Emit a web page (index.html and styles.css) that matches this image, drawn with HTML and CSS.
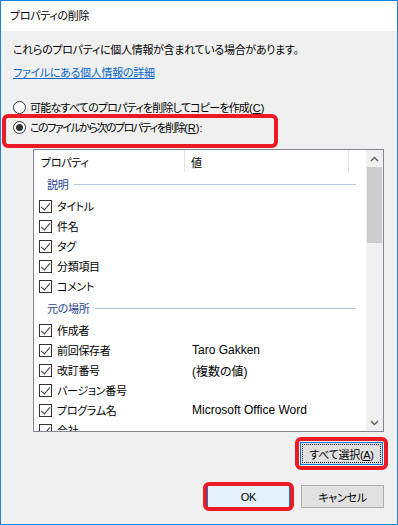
FILE: index.html
```html
<!DOCTYPE html>
<html lang="ja">
<head>
    <meta charset="UTF-8">
    <meta name="viewport" content="width=device-width, initial-scale=1.0">
    <title>プロパティの削除</title>
    <link rel="stylesheet" href="styles.css">
</head>
<body>
    <div class="window">
        <div class="titlebar">プロパティの削除</div>

        <div class="content">
            <p class="intro">これらのプロパティに個人情報が含まれている場合があります。</p>
            <a class="link" href="#">ファイルにある個人情報の詳細</a>

            <div class="options">
                <div class="radio-row">
                    <span class="radio"></span>
                    <span>可能なすべてのプロパティを削除してコピーを作成<span class="key">(<u>C</u>)</span></span>
                </div>
                <div class="radio-row marked">
                    <span class="radio checked"></span>
                    <span class="tight">このファイルから次のプロパティを削除<span class="key">(<u>R</u>):</span></span>
                </div>
            </div>

            <div class="listbox">
                <div class="list">
                    <div class="list-header">
                        <span class="col-name">プロパティ</span>
                        <span class="col-value">値</span>
                        <span class="col-rest"></span>
                    </div>

                    <div class="group"><span>説明</span></div>
                    <div class="row"><span class="check"></span><span class="name">タイトル</span><span class="value"></span></div>
                    <div class="row"><span class="check"></span><span class="name">件名</span><span class="value"></span></div>
                    <div class="row"><span class="check"></span><span class="name">タグ</span><span class="value"></span></div>
                    <div class="row"><span class="check"></span><span class="name">分類項目</span><span class="value"></span></div>
                    <div class="row"><span class="check"></span><span class="name">コメント</span><span class="value"></span></div>

                    <div class="group"><span>元の場所</span></div>
                    <div class="row"><span class="check"></span><span class="name">作成者</span><span class="value"></span></div>
                    <div class="row"><span class="check"></span><span class="name">前回保存者</span><span class="value">Taro Gakken</span></div>
                    <div class="row"><span class="check"></span><span class="name">改訂番号</span><span class="value">(複数の値)</span></div>
                    <div class="row"><span class="check"></span><span class="name">バージョン番号</span><span class="value"></span></div>
                    <div class="row"><span class="check"></span><span class="name">プログラム名</span><span class="value">Microsoft Office Word</span></div>
                    <div class="row"><span class="check"></span><span class="name">会社</span><span class="value"></span></div>
                </div>

                <div class="scrollbar">
                    <span class="arrow">
                        <svg width="9" height="6" viewBox="0 0 9 6"><path d="M1 5 L4.5 1.5 L8 5" fill="none" stroke="#606060" stroke-width="1.4"/></svg>
                    </span>
                    <span class="thumb"></span>
                    <span class="track"></span>
                    <span class="arrow">
                        <svg width="9" height="6" viewBox="0 0 9 6"><path d="M1 1 L4.5 4.5 L8 1" fill="none" stroke="#606060" stroke-width="1.4"/></svg>
                    </span>
                </div>
            </div>

            <div class="select-row">
                <button class="btn focused marked">すべて選択(<u>A</u>)</button>
            </div>

            <div class="dialog-buttons">
                <button class="btn default marked">OK</button>
                <button class="btn">キャンセル</button>
            </div>
        </div>
    </div>
</body>
</html>
```

FILE: styles.css
```css
* {
    box-sizing: border-box;
}

body {
    margin: 0;
    font-family: "Liberation Sans", "Noto Sans CJK JP", sans-serif;
    font-size: 11px;
    letter-spacing: -0.3px;
    font-feature-settings: "palt";
    color: #000;
    background: #f0f0f0;
}

.window {
    width: 398px;
    height: 525px;
    border: 1px solid #1883d7;
    display: flex;
    flex-direction: column;
    background: #f0f0f0;
}

.titlebar {
    height: 30px;
    line-height: 30px;
    padding-left: 9px;
    background: #fff;
}

.content {
    flex: 1;
    padding: 0 12px;
    display: flex;
    flex-direction: column;
}

.intro {
    margin: 11px 0 0;
    line-height: 16px;
}

.link {
    margin-top: 7px;
    line-height: 16px;
    color: #0066cc;
    align-self: flex-start;
}

.options {
    margin-top: 16px;
}

.radio-row {
    position: relative;
    height: 20px;
    display: flex;
    align-items: center;
    gap: 4px;
    letter-spacing: -0.8px;
}

.radio-row .tight {
    letter-spacing: -1.5px;
}

.radio-row .key {
    letter-spacing: 0;
}

.radio {
    width: 13px;
    height: 13px;
    border: 1px solid #333;
    border-radius: 50%;
    background: #fff;
    display: flex;
    align-items: center;
    justify-content: center;
}

.radio.checked::after {
    content: "";
    width: 7px;
    height: 7px;
    border-radius: 50%;
    background: #333;
}

/* red annotation frames from the screenshot */
.marked {
    position: relative;
}

.radio-row.marked::before {
    content: "";
    position: absolute;
    left: -11px;
    top: -3px;
    width: 268px;
    height: 26px;
    border: 4px solid #ec1b23;
    border-radius: 6px;
}

.listbox {
    margin: 12px 1px 0 20px;
    height: 283px;
    border: 1px solid #828790;
    background: #fff;
    display: flex;
}

.list {
    flex: 1;
    overflow: hidden;
}

.list-header {
    height: 22px;
    display: flex;
    line-height: 18px;
}

.list-header span {
    padding-top: 4px;
    border-right: 1px solid #e5e5e5;
}

.col-name {
    width: 151px;
    padding-left: 7px;
}

.col-value {
    width: 164px;
    padding-left: 6px;
}

.col-rest {
    flex: 1;
    border-right: none !important;
}

.group {
    height: 24px;
    display: flex;
    align-items: center;
    padding: 0 10px 0 13px;
    color: #1e3c96;
    gap: 6px;
}

.group::after {
    content: "";
    flex: 1;
    height: 1px;
    background: #b9c6de;
}

.row {
    height: 20px;
    display: flex;
    align-items: center;
    padding-left: 5px;
}

.check {
    width: 13px;
    height: 13px;
    border: 1px solid #333;
    position: relative;
}

.check::after {
    content: "";
    position: absolute;
    left: 3px;
    top: 0px;
    width: 4px;
    height: 8px;
    border: solid #333;
    border-width: 0 1px 1px 0;
    transform: rotate(40deg);
}

.name {
    width: 133px;
    padding-left: 5px;
}

.value {
    padding-left: 7px;
    font-size: 12px;
    letter-spacing: 0;
}

.scrollbar {
    width: 17px;
    background: #f0f0f0;
    display: flex;
    flex-direction: column;
}

.arrow {
    height: 17px;
    display: flex;
    align-items: center;
    justify-content: center;
}

.thumb {
    height: 76px;
    margin: 0 1px;
    background: #cdcdcd;
}

.track {
    flex: 1;
}

.select-row {
    margin-top: 10px;
    display: flex;
    justify-content: flex-end;
    padding-right: 2px;
}

.btn {
    height: 23px;
    width: 83px;
    font: inherit;
    letter-spacing: inherit;
    border: 1px solid #adadad;
    background: #e1e1e1;
    padding: 0;
}

.btn.focused {
    border-color: #0078d7;
    outline: 1px dotted #000;
    outline-offset: -3px;
}

.btn.default {
    border-color: #0078d7;
    background: #e5f1fb;
}

.btn.marked::before {
    content: "";
    position: absolute;
    inset: -6px;
    border: 4px solid #ec1b23;
    border-radius: 6px;
}

.btn.default.marked::before {
    inset: -4px -5px;
}

.dialog-buttons {
    margin-top: 20px;
    display: flex;
    justify-content: flex-end;
    gap: 11px;
    padding-right: 1px;
}
```
